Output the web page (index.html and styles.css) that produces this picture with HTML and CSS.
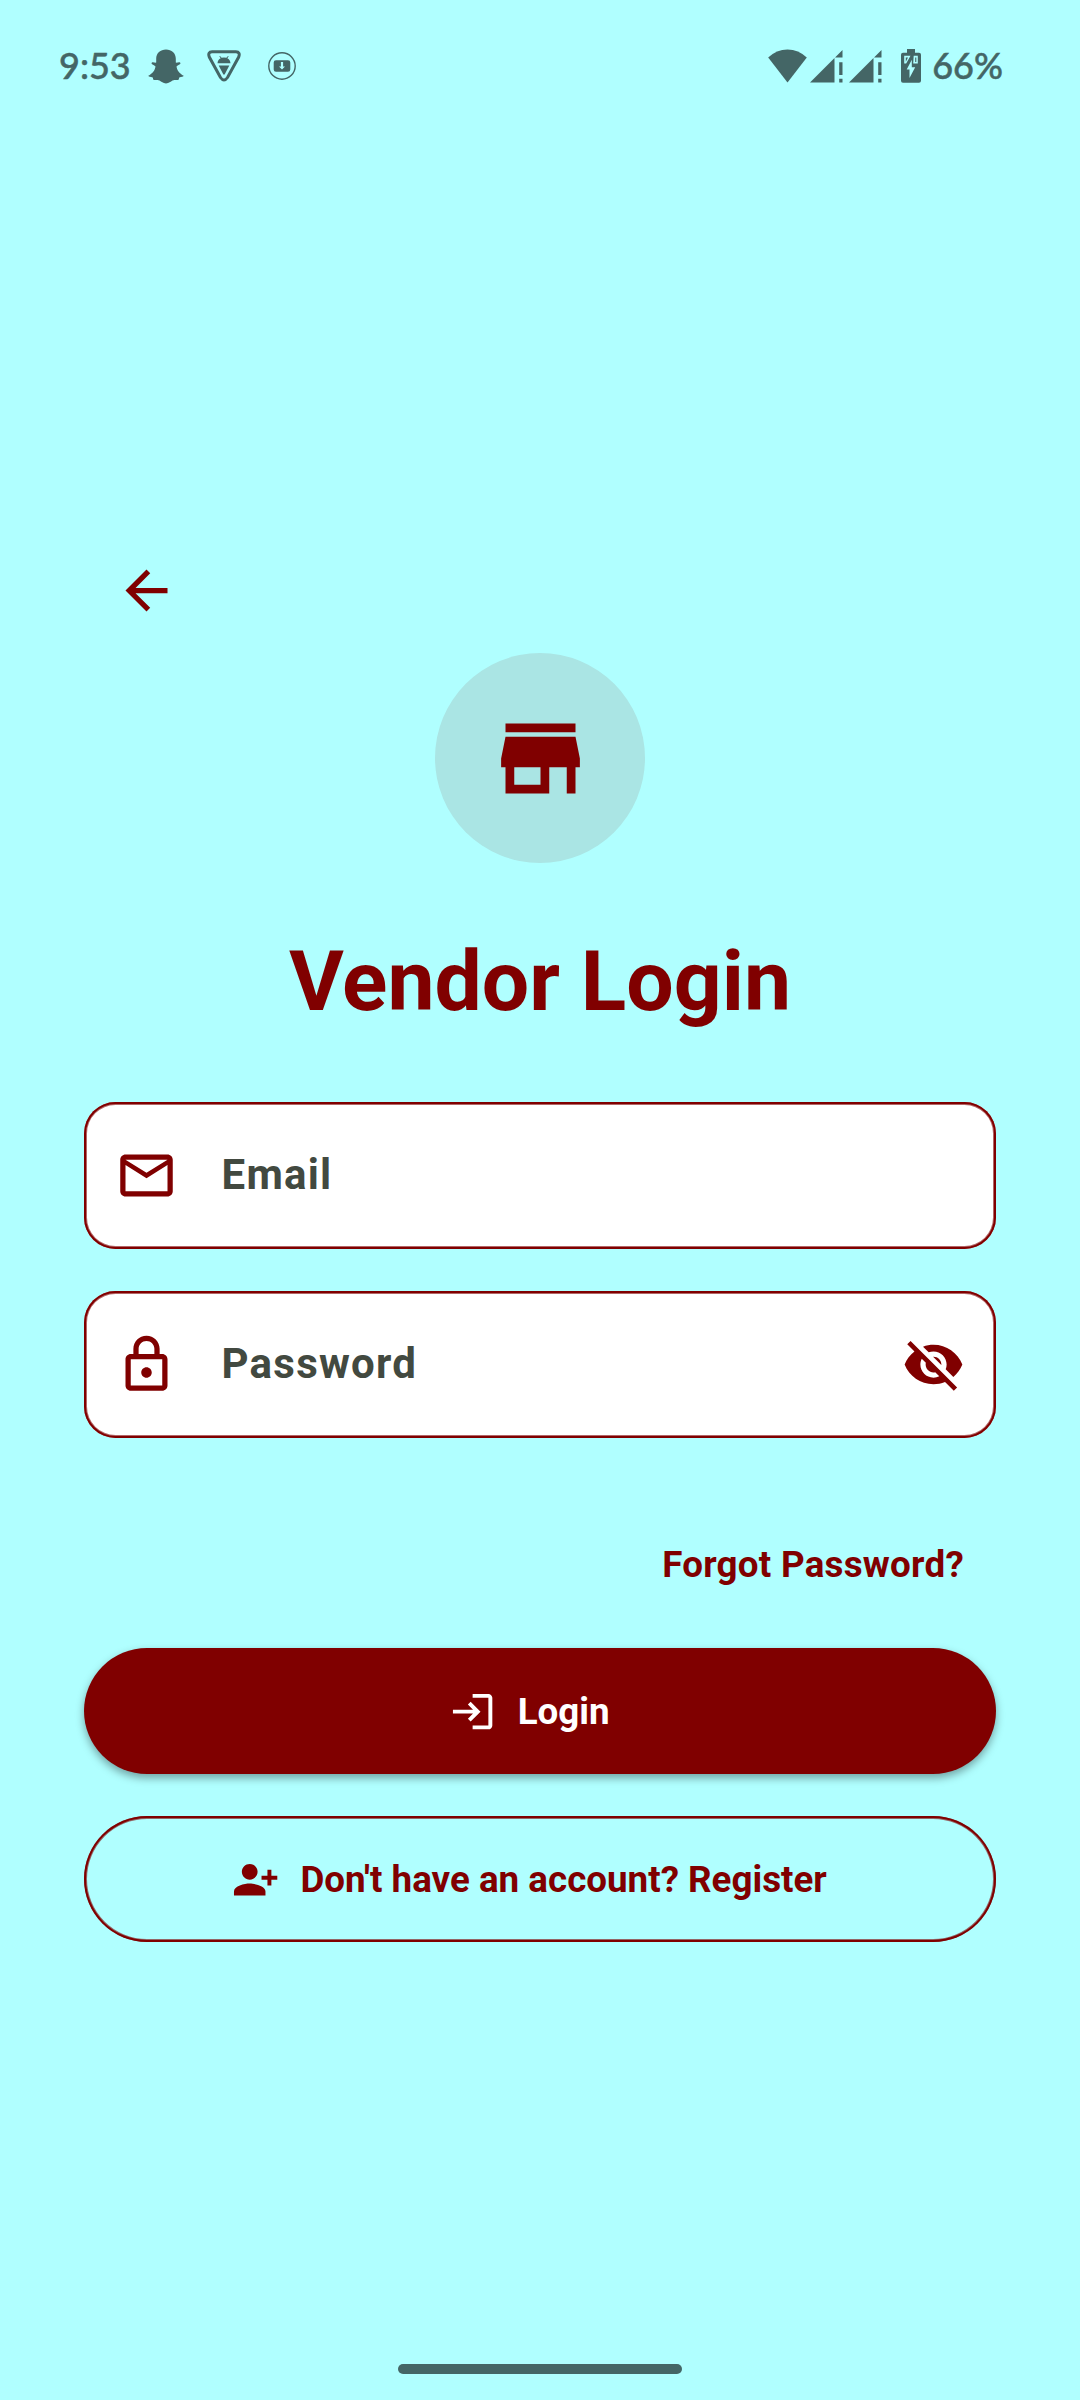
FILE: index.html
```html
<!DOCTYPE html>
<html lang="en">
<head>
<meta charset="utf-8">
<title>Vendor Login</title>
<link rel="stylesheet" href="styles.css">
</head>
<body>
<header class="status">
  <div class="status-left">
    <span class="status-text time">9:53</span>
    <svg class="snap" width="36" height="35" viewBox="0 0 36 35"><path d="M18 .6C23.600 .6 27.800 4.200 27.800 9.800V13.600C29 13.900 30.700 12.900 32 13.400C32.900 13.900 32.400 15 31.300 15.600L28.600 17.200C28.500 20.500 31.500 24.500 35.700 26.800C35.800 27.800 33.500 28 31.200 28.500C30.900 29.500 31 30.600 30.200 30.900C28.500 31.100 26.500 30.700 24.500 31.500C22.500 32.600 21 34.400 18 34.400S13.500 32.600 11.500 31.500C9.500 30.700 7.500 31.100 5.800 30.900C5 30.600 5.100 29.500 4.800 28.500C2.500 28 .2 27.800 .3 26.800C4.500 24.500 7.500 20.500 7.400 17.200L4.700 15.600C3.600 15 3.100 13.900 4 13.400C5.300 12.900 7 13.900 8.200 13.600V9.800C8.200 4.200 12.400 .6 18 .6Z"/></svg>
    <svg class="triangle" width="34" height="32" viewBox="0 0 34 32"><path d="M5.200 1.800H28.800Q33.600 2 31.700 7L20.500 27.500Q17 32.500 13.500 27.500L2.300 7Q.4 2 5.200 1.800Z" fill="none" stroke="currentColor" stroke-width="3"/><path d="M10.500 13.200C10.700 10.600 12 9 13.700 8.200L12.300 6.300L13 5.900L14.600 7.800Q17 7 19.400 7.800L21 5.900L21.700 6.300L20.300 8.200C22 9 23.300 10.600 23.500 13.200ZM11.700 15.500H22.300L17.900 24Q17 25.400 16.100 24Z"/></svg>
    <svg width="28" height="28" viewBox="0 0 28 28"><circle cx="14" cy="14" r="13.200" fill="none" stroke="currentColor" stroke-width="1.400"/><path fill-rule="evenodd" d="M8 8.300H20Q22.300 8.300 22.300 10.600V17.400Q22.300 19.700 20 19.700H8Q5.700 19.700 5.700 17.400V10.600Q5.700 8.300 8 8.300ZM12.900 10V14.600H11L14 17.600L17 14.600H15.100V10Z"/></svg>
  </div>
  <div class="status-right">
    <svg width="39" height="34" viewBox="0 0 39 34"><path d="M.2 8.600Q8.500 .5 19.500 .5T38.800 8.600L19.500 33.400Z"/></svg>
    <svg class="signal" width="33" height="34" viewBox="0 0 33 34"><path d="M0 33.500L24.500 9V33.500ZM32.500 1V8.600H25ZM29.200 13.200H32.500V26H29.200ZM29.200 29.700H32.500V33.500H29.200Z"/></svg>
    <svg class="signal signal-second" width="33" height="34" viewBox="0 0 33 34"><path d="M0 33.500L24.500 9V33.500ZM32.500 1V8.600H25ZM29.200 13.200H32.500V26H29.200ZM29.200 29.700H32.500V33.500H29.200Z"/></svg>
    <svg class="battery" width="20" height="34" viewBox="0 0 20 34"><path fill-rule="evenodd" d="M6 0H14V3.700H18Q20 3.700 20 5.700V31.700Q20 33.700 18 33.700H2Q0 33.700 0 31.700V5.700Q0 3.700 2 3.700H6ZM3.200 6.800V14.600H5.200L9.500 6.800ZM12.700 6.800L12.200 14.600H16.800V6.800ZM10.800 10.700L5.700 20.400H8.500V29L14.200 18.200H10.800Z"/><path d="M4.800 8.400H7L4.800 12.700ZM14.200 8.400H15.300V13H14.200Z"/></svg>
    <span class="status-text">66%</span>
  </div>
</header>
<main class="login">
  <button class="back" aria-label="Back"><svg class="icon" viewBox="0 0 24 24"><path d="M20 11H7.830l5.590-5.590L12 4l-8 8 8 8 1.410-1.410L7.830 13H20z"/></svg></button>
  <div class="avatar"><svg class="store-icon" viewBox="0 0 24 24"><path d="M20 4H4v2h16V4zm1 10v-2l-1-5H4l-1 5v2h1v6h10v-6h4v6h2v-6h1zm-9 4H6v-4h6v4z"/></svg></div>
  <h1 class="title">Vendor Login</h1>
  <div class="fields">
    <label class="field">
      <svg class="icon" viewBox="0 0 24 24"><path d="M22 6c0-1.100-.9-2-2-2H4c-1.100 0-2 .9-2 2v12c0 1.100.9 2 2 2h16c1.100 0 2-.9 2-2V6zm-2 0l-8 4.990L4 6h16zm0 12H4V8l8 5 8-5v10z"/></svg>
      <span class="field-label">Email</span>
    </label>
    <label class="field">
      <svg class="icon" viewBox="0 0 24 24"><path d="M18 8h-1V6c0-2.760-2.240-5-5-5S7 3.240 7 6v2H6c-1.100 0-2 .9-2 2v10c0 1.100.9 2 2 2h12c1.100 0 2-.9 2-2V10c0-1.100-.9-2-2-2zM9 6c0-1.660 1.340-3 3-3s3 1.340 3 3v2H9V6zm9 14H6V10h12v10zm-6-3c1.100 0 2-.9 2-2s-.9-2-2-2-2 .9-2 2 .9 2 2 2z"/></svg>
      <span class="field-label">Password</span>
      <svg class="icon" viewBox="0 0 24 24"><path d="M12 7c2.760 0 5 2.240 5 5 0 .65-.13 1.260-.36 1.830l2.920 2.920c1.510-1.260 2.700-2.890 3.430-4.750-1.730-4.390-6-7.500-11-7.500-1.400 0-2.740.25-3.980.7l2.160 2.160C10.740 7.130 11.350 7 12 7zM2 4.270l2.280 2.280.46.46C3.080 8.300 1.780 10.020 1 12c1.730 4.390 6 7.500 11 7.500 1.550 0 3.030-.3 4.380-.84l.42.42L19.730 22 21 20.730 3.270 3 2 4.270zM7.530 9.800l1.550 1.550c-.05.21-.08.43-.08.65 0 1.660 1.340 3 3 3 .22 0 .44-.03.65-.08l1.550 1.550c-.67.33-1.410.53-2.200.53-2.760 0-5-2.240-5-5 0-.79.2-1.530.53-2.200zm4.310-.78l3.150 3.150.02-.16c0-1.660-1.340-3-3-3l-.17.01z"/></svg>
    </label>
  </div>
  <a class="forgot">Forgot Password?</a>
  <button class="button primary"><svg class="button-icon" viewBox="0 0 24 24"><path d="M11 7L9.600 8.400l2.600 2.600H2v2h10.200l-2.600 2.600L11 17l5-5-5-5zm9 12h-8v2h8c1.100 0 2-.9 2-2V5c0-1.100-.9-2-2-2h-8v2h8v14z"/></svg>Login</button>
  <button class="button outlined"><svg class="button-icon" viewBox="0 0 24 24"><path d="M13 8c0-2.210-1.790-4-4-4S5 5.790 5 8s1.790 4 4 4 4-1.790 4-4zm2 2v2h3v3h2v-3h3v-2h-3V7h-2v3h-3zM1 18v2h16v-2c0-2.660-5.330-4-8-4s-8 1.340-8 4z"/></svg>Don't have an account? Register</button>
</main>
<footer class="nav"><div class="nav-handle"></div></footer>
</body>
</html>
```
FILE: styles.css
```css
* {
  box-sizing: border-box;
}

body {
  margin: 0;
  width: 1080px;
  height: 2400px;
  display: flex;
  flex-direction: column;
  background: #b0ffff;
  color: #800000;
  font-family: Roboto, sans-serif;
  overflow: hidden;
}

svg {
  display: block;
  flex: none;
  fill: currentColor;
}

button {
  border: 0;
  background: none;
  color: inherit;
  font: inherit;
}

.status {
  height: 132px;
  padding: 48px 77px 0 59px;
  display: flex;
  justify-content: space-between;
  color: #446666;
}

.status-left,
.status-right {
  display: flex;
  align-items: center;
  height: 36px;
}

.status-text {
  padding-bottom: 2px;
  font: 500 36px/36px Lato, sans-serif;
  -webkit-text-stroke: 0.5px currentColor;
  white-space: nowrap;
}

.time {
  width: 89px;
}

.triangle {
  margin: 0 27px 0 23px;
}

.signal {
  margin-left: 3px;
}

.signal-second {
  margin-left: 6px;
}

.battery {
  margin: 0 11px 0 19px;
}

.login {
  flex: 1;
  padding: 395px 84px 0;
  display: flex;
  flex-direction: column;
}

.back {
  width: 126px;
  height: 126px;
  padding: 0 1px 0 0;
  display: grid;
  place-items: center;
}

.icon {
  width: 63px;
  height: 63px;
}

.avatar {
  width: 210px;
  height: 210px;
  align-self: center;
  display: grid;
  place-items: center;
  border-radius: 50%;
  background: #aae5e4;
}

.store-icon {
  width: 105px;
  height: 105px;
}

.title {
  margin: 69px 0 70px;
  font-size: 84px;
  font-weight: 700;
  line-height: 100px;
  text-align: center;
}

.fields {
  display: grid;
  gap: 42px;
}

.field {
  height: 147px;
  padding: 0 31px;
  display: flex;
  align-items: center;
  border-radius: 31.500px;
  background: #fff;
  box-shadow: inset 0 0 0 2px #800000, inset 0 0 0 3px rgba(128, 0, 0, 0.6);
}

.field-label {
  flex: 1;
  padding: 0 0 2px 43.500px;
  color: #424940;
  font-size: 42px;
  font-weight: 700;
  letter-spacing: 1.250px;
  line-height: 49px;
}

.forgot {
  align-self: flex-end;
  margin: 105px 32px 61px 0;
  font-size: 36.750px;
  font-weight: 700;
  letter-spacing: 0.260px;
  line-height: 44px;
}

.button {
  height: 126px;
  padding: 1px 63px 0 42px;
  display: flex;
  align-items: center;
  justify-content: center;
  gap: 21px;
  border-radius: 63px;
  font-size: 36.750px;
  font-weight: 700;
  line-height: 44px;
}

.button-icon {
  width: 47.250px;
  height: 47.250px;
}

.primary {
  background: #800000;
  color: #fff;
  box-shadow: 0 4px 8px rgba(0, 0, 0, 0.360);
}

.outlined {
  margin-top: 42px;
  box-shadow: inset 0 0 0 2px #800000, inset 0 0 0 3px rgba(128, 0, 0, 0.6);
}

.nav {
  height: 36px;
  display: flex;
  justify-content: center;
}

.nav-handle {
  width: 284px;
  height: 10px;
  border-radius: 5px;
  background: #446666;
}
```
